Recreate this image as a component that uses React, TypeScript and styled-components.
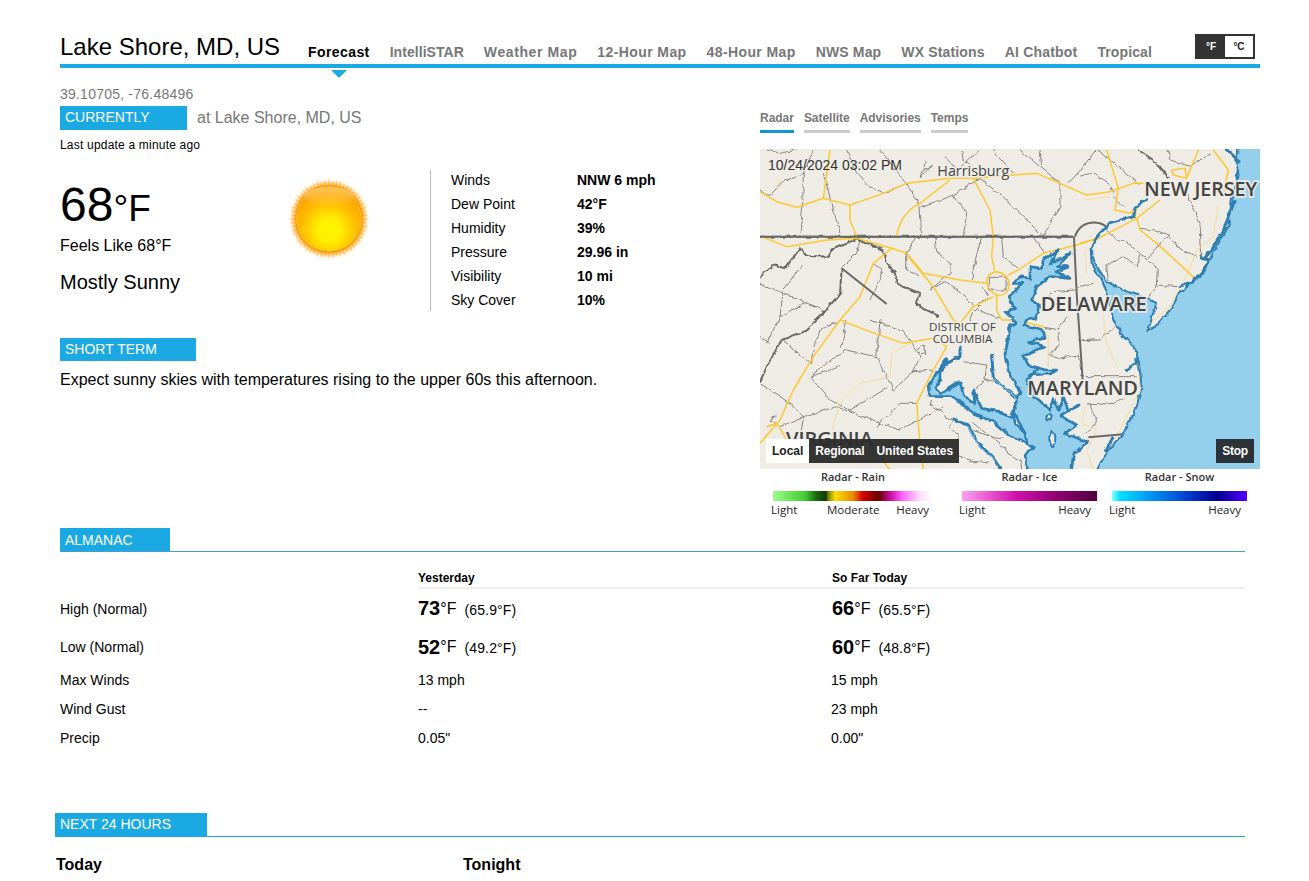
import React from "react";
import styled, { createGlobalStyle } from "styled-components";

const BLUE = "#1aa9e2";
const GRAY = "#777";

const Global = createGlobalStyle`
  html, body { margin: 0; padding: 0; background: #fff; overflow: hidden; }
  body { font-family: "Liberation Sans", Arial, sans-serif; color: #000; }
`;

const Page = styled.div`
  box-sizing: border-box;
  width: 1309px;
  height: 881px;
  padding: 34px 49px 0 60px;
  overflow: hidden;
`;
const Header = styled.header`
  display: flex;
  align-items: flex-end;
  height: 30px;
  border-bottom: 4px solid ${BLUE};
`;
const Title = styled.h1`
  margin: 0 28px 3px 0;
  font-size: 24px;
  line-height: 28px;
  font-weight: 400;
`;
const Nav = styled.nav`
  display: flex;
  gap: 20px;
`;
const NavItem = styled.a<{ $active?: boolean; $ls: number }>`
  position: relative;
  font-size: 14px;
  line-height: 16px;
  font-weight: 700;
  letter-spacing: ${(p) => p.$ls}px;
  padding-bottom: 4px;
  white-space: nowrap;
  color: ${(p) => (p.$active ? "#000" : GRAY)};
  ${(p) =>
    p.$active &&
    `&::after {
      content: "";
      position: absolute;
      left: 23px;
      top: 26px;
      border-left: 8px solid transparent;
      border-right: 8px solid transparent;
      border-top: 8px solid ${BLUE};
    }`}
`;
const Units = styled.div`
  display: flex;
  box-sizing: border-box;
  margin: 0 5px 5px auto;
  width: 60px;
  height: 25px;
  border: 2px solid #333;
`;
const Unit = styled.span<{ $on?: boolean }>`
  flex: 1;
  display: flex;
  align-items: center;
  justify-content: center;
  font-size: 10px;
  font-weight: 700;
  background: ${(p) => (p.$on ? "#333" : "#fff")};
  color: ${(p) => (p.$on ? "#fff" : "#222")};
`;
const Coords = styled.div`
  margin-top: 18px;
  font-size: 14px;
  line-height: 16px;
  letter-spacing: 0.22px;
  color: ${GRAY};
`;
const Main = styled.div`
  display: flex;
  margin-top: 4px;
`;
const LeftCol = styled.div`
  width: 700px;
`;
const RightCol = styled.div`
  width: 500px;
  padding-top: 5px;
`;
const HeadingRow = styled.div`
  display: flex;
  align-items: center;
  gap: 10px;
`;
const Tag = styled.div<{ $w: number; $lh?: number }>`
  box-sizing: border-box;
  width: ${(p) => p.$w}px;
  height: 24px;
  padding-left: 5px;
  background: ${BLUE};
  color: #fff;
  font-size: 14px;
  line-height: ${(p) => p.$lh ?? 23}px;
`;
const AtPlace = styled.span`
  font-size: 16px;
  line-height: 20px;
  color: ${GRAY};
`;
const Updated = styled.div`
  margin-top: 8px;
  font-size: 12px;
  line-height: 14px;
  letter-spacing: 0.2px;
`;
const Current = styled.div`
  display: flex;
  margin-top: 18px;
`;
const TempBox = styled.div`
  display: flex;
  width: 370px;
  box-sizing: border-box;
`;
const TempText = styled.div`
  width: 225px;
  padding-top: 11px;
`;
const Temp = styled.div`
  font-size: 48px;
  line-height: 48px;
  white-space: nowrap;
`;
const TempUnit = styled.span`
  font-size: 37px;
`;
const Feels = styled.div`
  margin-top: 4px;
  font-size: 16px;
  line-height: 18px;
`;
const Cond = styled.div`
  margin-top: 15px;
  font-size: 20px;
  line-height: 24px;
`;
const SunIcon = styled.svg`
  display: block;
  width: 90px;
  height: 90px;
  margin-top: 4px;
  margin-left: -1px;
`;
const Details = styled.div`
  display: flex;
  flex-direction: column;
  gap: 4px;
  box-sizing: border-box;
  height: 141px;
  padding-left: 20px;
  border-left: 1px solid #bbb;
`;
const DetailRow = styled.div`
  display: flex;
  height: 20px;
  align-items: center;
  font-size: 14px;
`;
const DetailLabel = styled.span`
  width: 126px;
`;
const DetailValue = styled.strong`
  font-weight: 700;
`;
const ShortBlock = styled.div`
  margin-top: 27px;
`;
const ShortText = styled.p`
  margin: 9px 0 0;
  font-size: 16px;
  line-height: 20px;
`;
const Tabs = styled.div`
  display: flex;
  gap: 10px;
`;
const Tab = styled.a<{ $on?: boolean }>`
  font-size: 12px;
  line-height: 14px;
  font-weight: 700;
  letter-spacing: -0.03px;
  color: ${GRAY};
  padding-bottom: 5px;
  border-bottom: 3px solid ${(p) => (p.$on ? "#1396d0" : "#ccc")};
`;
const MapBox = styled.div`
  position: relative;
  margin-top: 16px;
  width: 500px;
  height: 320px;
  overflow: hidden;
  background: #efece6;
`;
const MapSvg = styled.svg`
  display: block;
  width: 500px;
  height: 320px;
`;
const County = styled.path`
  fill: none;
  stroke: #6e6c68;
  stroke-width: 2.4;
  stroke-linejoin: round;
`;
const StateLine = styled.path`
  fill: none;
  stroke: #696967;
  stroke-width: 6;
  stroke-linejoin: round;
`;
const Road = styled.path<{ $thin?: boolean }>`
  fill: none;
  stroke: ${(p) => (p.$thin ? "#f6d788" : "#fdc82f")};
  stroke-width: ${(p) => (p.$thin ? 2.5 : 4.5)};
  stroke-linejoin: round;
`;
const Water = styled.path<{ $edge: number }>`
  fill: #94cfec;
  stroke: #2f7fb2;
  stroke-width: ${(p) => p.$edge};
  stroke-linejoin: round;
`;
const RiverEdge = styled.path`
  fill: none;
  stroke: #2f7fb2;
  stroke-width: 9;
  stroke-linejoin: round;
`;
const RiverFill = styled.path`
  fill: none;
  stroke: #94cfec;
  stroke-width: 3;
  stroke-linejoin: round;
`;
const Isle = styled.ellipse`
  fill: #efece6;
  stroke: #2f7fb2;
  stroke-width: 6;
`;
const MapLabel = styled.text<{ $size: number; $light?: boolean }>`
  font-family: "Open Sans", sans-serif;
  font-size: ${(p) => p.$size}px;
  font-weight: ${(p) => (p.$light ? 500 : 600)};
  fill: #454545;
  stroke: rgba(239, 236, 230, 0.88);
  stroke-width: 10px;
  paint-order: stroke;
`;
const Stamp = styled.div`
  position: absolute;
  left: 8px;
  top: 8px;
  font-size: 14px;
  line-height: 16px;
  color: #333;
`;
const MapButtons = styled.div`
  position: absolute;
  left: 6px;
  top: 290px;
  display: flex;
  height: 24px;
  background: rgba(45, 45, 45, 0.96);
`;
const MapBtn = styled.span<{ $on?: boolean; $ls?: number }>`
  padding: 0 6px;
  font-size: 12px;
  line-height: 24px;
  font-weight: 700;
  letter-spacing: ${(p) => p.$ls ?? 0}px;
  background: ${(p) => (p.$on ? "#fff" : "transparent")};
  color: ${(p) => (p.$on ? "#222" : "#fff")};
`;
const StopBtn = styled.span`
  position: absolute;
  right: 6px;
  top: 290px;
  width: 38px;
  height: 24px;
  text-align: center;
  font-size: 12px;
  line-height: 24px;
  font-weight: 700;
  letter-spacing: -0.3px;
  color: #fff;
  background: #2b3338;
`;
const Legend = styled.div`
  display: flex;
  font-family: "Open Sans", sans-serif;
  font-size: 11.5px;
  line-height: 14px;
  color: #222;
`;
const Scale = styled.div<{ $w: number; $ml: number }>`
  width: ${(p) => p.$w}px;
  margin-left: ${(p) => p.$ml}px;
`;
const ScaleTitle = styled.div`
  text-align: center;
  margin-top: 1px;
  font-size: 11px;
  font-weight: 600;
  color: #333;
`;
const ScaleBar = styled.div<{ $bg: string }>`
  height: 10px;
  margin-top: 7px;
  background: ${(p) => p.$bg};
`;
const ScaleLabels = styled.div<{ $l: number; $r: number }>`
  display: flex;
  justify-content: space-between;
  margin: 2px ${(p) => p.$r}px 0 ${(p) => p.$l}px;
`;
const MidLabel = styled.span`
  margin-left: 13px;
`;
const Section = styled.section`
  margin-top: 11px;
`;
const Rule = styled.div<{ $color: string; $ml?: number; $w: number }>`
  display: flex;
  width: ${(p) => p.$w}px;
  margin-left: ${(p) => p.$ml ?? 0}px;
  border-bottom: 1px solid ${(p) => p.$color};
`;
const SmallTag = styled(Tag)`
  height: 23px;
`;
const Table = styled.div`
  display: grid;
  grid-template-columns: 358px 414px 413px;
  width: 1185px;
  margin-top: 19px;
`;
const HeadCell = styled.div<{ $blank?: boolean }>`
  font-size: 12px;
  line-height: 14px;
  font-weight: 700;
  padding-bottom: 2px;
  border-bottom: 2px solid ${(p) => (p.$blank ? "transparent" : "#eee")};
`;
const Cell = styled.div<{ $h: number; $shift?: number }>`
  display: flex;
  align-items: center;
  height: ${(p) => p.$h}px;
  font-size: 14px;
  margin-left: ${(p) => p.$shift ?? 0}px;
`;
const Big = styled.strong`
  font-size: 20px;
  font-weight: 700;
`;
const BigUnit = styled.span`
  font-size: 16px;
`;
const Normal = styled.span`
  margin-left: 8px;
  margin-top: 2px;
  letter-spacing: 0.15px;
`;
const NextSection = styled.section`
  margin-top: 61px;
`;
const DayRow = styled.div`
  display: grid;
  grid-template-columns: 407px 400px;
  margin: 18px 0 0 -4px;
  font-size: 16px;
  line-height: 20px;
  font-weight: 700;
`;

const Sun = () => {
  const rays = Array.from({ length: 60 }, (_, i) => {
    const a = (i / 60) * Math.PI * 2;
    const r = i % 3 === 0 ? 42 : i % 3 === 1 ? 37.5 : 39.5;
    return (
      <line
        key={i}
        x1={45 + Math.cos(a) * 31}
        y1={45 + Math.sin(a) * 31}
        x2={45 + Math.cos(a) * r}
        y2={45 + Math.sin(a) * r}
        stroke="url(#sunRay)"
        strokeWidth="1.4"
      />
    );
  });
  return (
    <SunIcon viewBox="0 0 90 90">
      <defs>
        <radialGradient id="sunRay" gradientUnits="userSpaceOnUse" cx="45" cy="45" r="42">
          <stop offset="0.78" stopColor="#ff9a00" />
          <stop offset="0.9" stopColor="#ffc14d" stopOpacity="0.6" />
          <stop offset="1" stopColor="#ffe0a0" stopOpacity="0.05" />
        </radialGradient>
        <radialGradient id="sunHalo" gradientUnits="userSpaceOnUse" cx="45" cy="45" r="40">
          <stop offset="0.8" stopColor="#ff9000" />
          <stop offset="0.9" stopColor="#ffb030" stopOpacity="0.55" />
          <stop offset="1" stopColor="#ffd080" stopOpacity="0" />
        </radialGradient>
        <radialGradient id="sunDisc" gradientUnits="userSpaceOnUse" cx="45" cy="56" r="38">
          <stop offset="0" stopColor="#fff700" />
          <stop offset="0.3" stopColor="#ffee00" />
          <stop offset="0.7" stopColor="#ffbe00" />
          <stop offset="1" stopColor="#ffa400" />
        </radialGradient>
        <linearGradient id="sunGloss" x1="0" y1="0" x2="0" y2="1">
          <stop offset="0" stopColor="#fff" stopOpacity="0.35" />
          <stop offset="1" stopColor="#fff" stopOpacity="0" />
        </linearGradient>
      </defs>
      <circle cx="45" cy="45" r="40" fill="url(#sunHalo)" />
      {rays}
      <circle cx="45" cy="45" r="33.5" fill="#ff8c00" />
      <circle cx="45" cy="45" r="32.6" fill="#ffe34d" />
      <circle cx="45" cy="45" r="32" fill="url(#sunDisc)" />
      <ellipse cx="45" cy="23" rx="25" ry="10" fill="url(#sunGloss)" />
    </SunIcon>
  );
};

const counties = [
  "M0,120 L30,140 L70,95 L130,70 L160,0",
  "M130,70 L128,170 L120,250",
  "M20,0 L60,10 L110,0",
  "M190,70 L240,250",
  "M260,0 L290,70 L330,110 L370,130 L440,100 L480,170 L485,258",
  "M360,0 L400,50 L440,100",
  "M485,170 L580,135 L620,190 L610,258",
  "M490,60 L520,45 L480,80 L500,30",
  "M580,135 L660,85 L740,150 L810,220 L850,258",
  "M555,20 L590,60 L660,0",
  "M605,0 L610,30 L640,50",
  "M700,0 L760,70",
  "M780,0 L840,50 L900,100 L900,170 L850,258",
  "M840,0 L845,45",
  "M925,100 L975,45 L1010,0",
  "M1015,0 L1135,100",
  "M960,75 L1000,70 L1050,105 L1060,130",
  "M1060,140 L1090,170",
  "M1280,130 L1320,220 L1325,320",
  "M1225,255 L1160,330",
  "M1225,255 L1250,290 L1310,320",
  "M1140,235 L1185,240 L1225,255",
  "M1040,240 L1060,265 L1100,275 L1195,360 L1192,405 L1250,410",
  "M1035,350 L1090,320 L1135,350 L1138,315",
  "M1192,405 L1170,440",
  "M1040,350 L1045,390",
  "M955,410 L1000,400",
  "M965,572 L1020,570 L1065,530",
  "M1220,0 L1235,30 L1290,50 L1355,10",
  "M525,265 L530,305 L570,340 L570,370 L510,420",
  "M665,262 L640,350 L640,390",
  "M725,262 L730,320 L775,355",
  "M510,420 L555,395 L610,435 L640,470",
  "M665,410 L685,435",
  "M630,515 L640,485 L685,440",
  "M650,480 L720,505",
  "M945,420 L880,425 L840,465",
  "M925,495 L895,540 L855,532",
  "M895,540 L900,580 L875,615",
  "M955,570 L1020,565",
  "M820,262 L855,310",
  "M610,635 L680,645 L675,685 L650,720",
  "M675,685 L700,695",
  "M515,750 L510,765 L545,785 L555,800 L580,810 L565,830 L595,855 L595,870",
  "M640,820 L730,890 L745,915 L780,930 L785,957",
  "M590,915 L640,935 L685,935",
  "M635,840 L710,865 L730,860",
  "M980,765 L1060,760 L1090,745",
  "M990,765 L1010,815 L980,850",
  "M865,615 L895,625 L955,615 L965,675",
  "M960,680 L1130,680",
  "M688,382 H738 V420 H688 Z",
  "M465,265 L440,310 L440,360 L480,380",
  "M245,355 L290,310 L300,265",
  "M340,340 L370,360 L330,450",
  "M130,345 L70,420 L60,500 L20,580",
  "M0,400 L70,430 L180,475",
  "M0,560 L30,580",
  "M70,570 L150,640 L180,540 L240,510",
  "M150,680 L200,640 L260,600 L350,620 L400,720",
  "M240,650 L150,680 L210,750 L270,780 L380,715",
  "M400,720 L460,665 L520,660",
  "M330,510 L430,545 L480,620 L460,665",
  "M0,700 L90,760 L130,800 L230,770 L360,820 L420,840 L550,770",
  "M50,795 L30,810 L60,830 L130,800 L120,870",
  "M350,830 L420,760 L470,760",
  "M245,590 L260,510 M360,510 L350,620",
  "M60,500 L130,460 L180,475 L190,490",
  "M470,600 L490,585 L495,610 L465,605",
];

const roads = [
  "M0,125 L50,155 L110,172 L190,145 L270,165 L370,130 L440,100 L570,85 L640,85 L760,75 L830,70 L900,100 L980,135 L1050,125 L1120,100 L1150,100",
  "M210,0 L190,145",
  "M270,165 L270,210 L290,260",
  "M640,85 L690,180 L700,260 L695,320 L705,365",
  "M0,258 L80,290 L200,270 L290,265 L395,295 L440,310 L490,370 L600,390 L680,400",
  "M410,260 Q420,190 480,160 L570,90",
  "M395,295 L340,340 L300,440 L240,510 L160,620 L100,720 L60,810 L0,880",
  "M240,510 L330,545 L430,580 L520,565 L560,590 L520,660 L470,760 L480,880 L490,960",
  "M710,365 Q678,370 680,400 Q690,430 715,437 Q745,435 748,405 Q745,370 710,365",
  "M745,375 L775,360 L850,310 L950,285 L1015,265 L1130,205 L1200,150",
  "M445,320 L520,410 L580,510 L600,520",
  "M700,440 L640,470 L600,520",
  "M710,435 L710,480 L725,510 L770,510 L850,530",
  "M1130,205 L1140,240 L1190,280 L1305,385",
  "M1040,0 L1075,115 L1065,180 L1110,190 L1130,170 L1125,205",
  "M1315,0 L1280,85 L1240,75 L1235,60 L1275,55 L1280,85",
  "M1360,0 L1405,60 L1390,130",
  "M960,280 L1015,265",
  "M20,830 L50,820 L100,900",
  "M330,880 L390,960",
];

const thinRoads = [
  "M1375,170 L1360,260 L1310,300 L1285,365 L1230,470 L1165,525 L1125,590 L1135,640",
  "M975,300 L980,370",
  "M1030,500 L1040,580 L1070,650",
  "M1135,640 L1140,720 L1060,880 L1040,960",
  "M975,770 L965,820 L1010,840 L980,900 L1000,960",
  "M390,680 L300,700 L240,760 L215,840",
  "M390,680 L395,610 L460,575",
  "M850,530 L865,560 L865,650",
  "M50,120 L60,90",
  "M970,150 L1050,140",
];

const ocean =
  "M1435,-30 L1540,-30 L1540,1000 L990,1000 L1040,905 L1085,860 L1130,770 L1145,710 L1137,640 L1125,590 L1090,560 L1060,510 L1050,460 L1030,400 L995,340 L992,295 L1005,340 L1040,395 L1090,420 L1160,445 L1188,460 L1180,490 L1165,540 L1185,530 L1230,480 L1260,430 L1290,400 L1320,370 L1345,335 L1375,280 L1405,230 L1415,150 L1425,110 L1435,70 L1430,40 Z";
const bay =
  "M850,330 L895,300 L870,340 L930,310 L895,350 L925,350 L885,365 L930,385 L870,380 L830,410 L815,450 L840,470 L830,505 L800,510 L790,525 L850,540 L855,565 L805,575 L855,590 L790,615 L805,645 L860,660 L890,660 L870,672 L810,675 L835,655 L800,690 L820,735 L870,780 L880,745 L895,780 L910,740 L925,780 L960,765 L900,795 L950,825 L915,850 L980,875 L940,915 L930,1000 L810,1000 L795,915 L820,890 L800,880 L795,850 L760,785 L770,755 L780,725 L745,665 L735,615 L745,560 L750,530 L765,515 L735,485 L765,475 L745,445 L760,430 L785,400 L760,400 L780,380 L810,385 L810,350 L845,355 Z";
const potomac =
  "M560,625 L540,655 L540,685 L525,715 L545,730 L575,710 L600,695 L610,735 L645,760 L640,720 L665,775 L720,785 L755,805 L758,787 L765,820 L795,850 L800,880 L740,850 L700,815 L640,793 L600,755 L570,740 L510,740 L505,715 L525,675 L560,635 Z";

const rain =
  "linear-gradient(90deg,#98ff88 0%,#44cc33 20%,#1a6a12 27%,#103a00 33%,#8a8a00 35%,#ffdd00 39%,#e88c00 50%,#d80000 56%,#660000 66%,#d010b0 74%,#ff66ff 81%,#ffe0ff 92%,#fff 100%)";
const ice = "linear-gradient(90deg,#ffa0f0 0%,#d010b0 40%,#900070 70%,#500040 100%)";
const snow =
  "linear-gradient(90deg,#80ffff 0%,#00e0ff 6%,#0090f0 30%,#0040d0 55%,#000090 78%,#5000ff 100%)";

const details = [
  ["Winds", "NNW 6 mph"],
  ["Dew Point", "42°F"],
  ["Humidity", "39%"],
  ["Pressure", "29.96 in"],
  ["Visibility", "10 mi"],
  ["Sky Cover", "10%"],
];

const navItems: [string, number][] = [
  ["IntelliSTAR", 0.05],
  ["Weather Map", 0.6],
  ["12-Hour Map", 0.4],
  ["48-Hour Map", 0.4],
  ["NWS Map", 0.15],
  ["WX Stations", 0.15],
  ["AI Chatbot", 0.2],
  ["Tropical", 0.1],
];

const MapArt = () => (
  <MapSvg viewBox="0 -3 1500 960">
    <defs>
      <filter id="rough" filterUnits="userSpaceOnUse" x="-40" y="-40" width="1600" height="1060">
        <feTurbulence type="fractalNoise" baseFrequency="0.045" numOctaves="2" seed="4" />
        <feDisplacementMap in="SourceGraphic" scale="14" xChannelSelector="R" yChannelSelector="G" />
      </filter>
    </defs>
    <g filter="url(#rough)">
      {counties.map((d, i) => (
        <County key={i} d={d} />
      ))}
      <StateLine d="M0,260 H940 M1135,0 L1180,30 L1225,85" />
      <StateLine d="M0,385 L40,345 L75,355 L120,295 L140,318 L210,320 L215,300 L290,265 L370,300 L375,330 L405,370 L410,400 L480,430 L470,465 L540,500" />
      <StateLine d="M65,570 L30,630 L0,695 M245,355 L240,430 L190,490 L130,545 L65,570" />
    </g>
    {thinRoads.map((d, i) => (
      <Road key={i} $thin d={d} />
    ))}
    {roads.map((d, i) => (
      <Road key={i} d={d} />
    ))}
    <StateLine d="M0,260 H940 M945,260 Q960,215 1010,218 Q1030,220 1040,232 M942,260 L950,430 L968,690 M985,862 L1090,853 M245,355 L380,462" />
    <g filter="url(#rough)">
      <Water $edge={6} d={ocean} />
      <Water $edge={8} d={bay} />
      <Water $edge={8} d={potomac} />
      <RiverEdge d="M1160,145 L1125,175 L1120,200 L1050,218 L1015,255 L992,295" />
      <RiverEdge d="M600,590 L600,620 L560,640 L540,665" />
      <RiverEdge d="M695,615 L700,685 L760,735 L775,750" />
      <RiverFill d="M700,685 L760,735 L775,750" />
      <RiverEdge d="M575,805 L625,825 L650,875 L700,925 L730,970" />
      <RiverFill d="M625,830 L650,880 L700,930" />
      <RiverEdge d="M1095,660 L1130,640 L1125,620" />
      <RiverEdge d="M1425,150 L1400,215 L1385,250 L1355,300 L1330,330" />
      <RiverEdge d="M1320,320 L1345,330 L1340,350 L1300,395 L1255,410" />
      <RiverEdge d="M1035,905 L1060,860" />
      <RiverEdge d="M1395,-5 L1440,35" />
      <Isle cx="877" cy="865" rx="9" ry="20" />
      <Isle cx="867" cy="800" rx="8" ry="8" />
    </g>
    <MapLabel $light $size={43} x="532" y="78">Harrisburg</MapLabel>
    <MapLabel $size={59} x="1153" y="137">NEW JERSEY</MapLabel>
    <MapLabel $size={60} x="842" y="482">DELAWARE</MapLabel>
    <MapLabel $size={60} x="802" y="735">MARYLAND</MapLabel>
    <MapLabel $light $size={35} x="507" y="543">DISTRICT OF</MapLabel>
    <MapLabel $light $size={35} x="518" y="580">COLUMBIA</MapLabel>
    <MapLabel $size={60} x="78" y="888">VIRGINIA</MapLabel>
  </MapSvg>
);

export default function App() {
  return (
    <Page>
      <Global />
      <Header>
        <Title>Lake Shore, MD, US</Title>
        <Nav>
          <NavItem $active $ls={0.4}>Forecast</NavItem>
          {navItems.map(([label, ls]) => (
            <NavItem key={label} $ls={ls}>{label}</NavItem>
          ))}
        </Nav>
        <Units>
          <Unit $on>°F</Unit>
          <Unit>°C</Unit>
        </Units>
      </Header>
      <Coords>39.10705, -76.48496</Coords>
      <Main>
        <LeftCol>
          <HeadingRow>
            <Tag $w={127}>CURRENTLY</Tag>
            <AtPlace>at Lake Shore, MD, US</AtPlace>
          </HeadingRow>
          <Updated>Last update a minute ago</Updated>
          <Current>
            <TempBox>
              <TempText>
                <Temp>
                  68<TempUnit>°F</TempUnit>
                </Temp>
                <Feels>Feels Like 68°F</Feels>
                <Cond>Mostly Sunny</Cond>
              </TempText>
              <Sun />
            </TempBox>
            <Details>
              {details.map(([k, v]) => (
                <DetailRow key={k}>
                  <DetailLabel>{k}</DetailLabel>
                  <DetailValue>{v}</DetailValue>
                </DetailRow>
              ))}
            </Details>
          </Current>
          <ShortBlock>
            <SmallTag $w={136}>SHORT TERM</SmallTag>
            <ShortText>Expect sunny skies with temperatures rising to the upper 60s this afternoon.</ShortText>
          </ShortBlock>
        </LeftCol>
        <RightCol>
          <Tabs>
            <Tab $on>Radar</Tab>
            <Tab>Satellite</Tab>
            <Tab>Advisories</Tab>
            <Tab>Temps</Tab>
          </Tabs>
          <MapBox>
            <MapArt />
            <Stamp>10/24/2024 03:02 PM</Stamp>
            <MapButtons>
              <MapBtn $on>Local</MapBtn>
              <MapBtn $ls={-0.2}>Regional</MapBtn>
              <MapBtn>United States</MapBtn>
            </MapButtons>
            <StopBtn>Stop</StopBtn>
          </MapBox>
          <Legend>
            <Scale $w={160} $ml={13}>
              <ScaleTitle>Radar - Rain</ScaleTitle>
              <ScaleBar $bg={rain} />
              <ScaleLabels $l={-2} $r={4}>
                <span>Light</span>
                <MidLabel>Moderate</MidLabel>
                <span>Heavy</span>
              </ScaleLabels>
            </Scale>
            <Scale $w={135} $ml={29}>
              <ScaleTitle>Radar - Ice</ScaleTitle>
              <ScaleBar $bg={ice} />
              <ScaleLabels $l={-3} $r={6}>
                <span>Light</span>
                <span>Heavy</span>
              </ScaleLabels>
            </Scale>
            <Scale $w={135} $ml={15}>
              <ScaleTitle>Radar - Snow</ScaleTitle>
              <ScaleBar $bg={snow} />
              <ScaleLabels $l={-3} $r={6}>
                <span>Light</span>
                <span>Heavy</span>
              </ScaleLabels>
            </Scale>
          </Legend>
        </RightCol>
      </Main>
      <Section>
        <Rule $color="#4a9cc7" $w={1185}>
          <SmallTag $w={110} $lh={24}>ALMANAC</SmallTag>
        </Rule>
        <Table>
          <HeadCell $blank />
          <HeadCell>Yesterday</HeadCell>
          <HeadCell>So Far Today</HeadCell>

          <Cell $h={39}>High (Normal)</Cell>
          <Cell $h={39}>
            <Big>73</Big>
            <BigUnit>°F</BigUnit>
            <Normal>(65.9°F)</Normal>
          </Cell>
          <Cell $h={39}>
            <Big>66</Big>
            <BigUnit>°F</BigUnit>
            <Normal>(65.5°F)</Normal>
          </Cell>

          <Cell $h={38}>Low (Normal)</Cell>
          <Cell $h={38}>
            <Big>52</Big>
            <BigUnit>°F</BigUnit>
            <Normal>(49.2°F)</Normal>
          </Cell>
          <Cell $h={38}>
            <Big>60</Big>
            <BigUnit>°F</BigUnit>
            <Normal>(48.8°F)</Normal>
          </Cell>

          <Cell $h={28}>Max Winds</Cell>
          <Cell $h={28}>13 mph</Cell>
          <Cell $h={28} $shift={-1}>15 mph</Cell>

          <Cell $h={29}>Wind Gust</Cell>
          <Cell $h={29}>--</Cell>
          <Cell $h={29} $shift={-1}>23 mph</Cell>

          <Cell $h={29}>Precip</Cell>
          <Cell $h={29}>0.05"</Cell>
          <Cell $h={29} $shift={-1}>0.00"</Cell>
        </Table>
      </Section>
      <NextSection>
        <Rule $color={BLUE} $ml={-5} $w={1190}>
          <SmallTag $w={152}>NEXT 24 HOURS</SmallTag>
        </Rule>
        <DayRow>
          <span>Today</span>
          <span>Tonight</span>
        </DayRow>
      </NextSection>
    </Page>
  );
}
